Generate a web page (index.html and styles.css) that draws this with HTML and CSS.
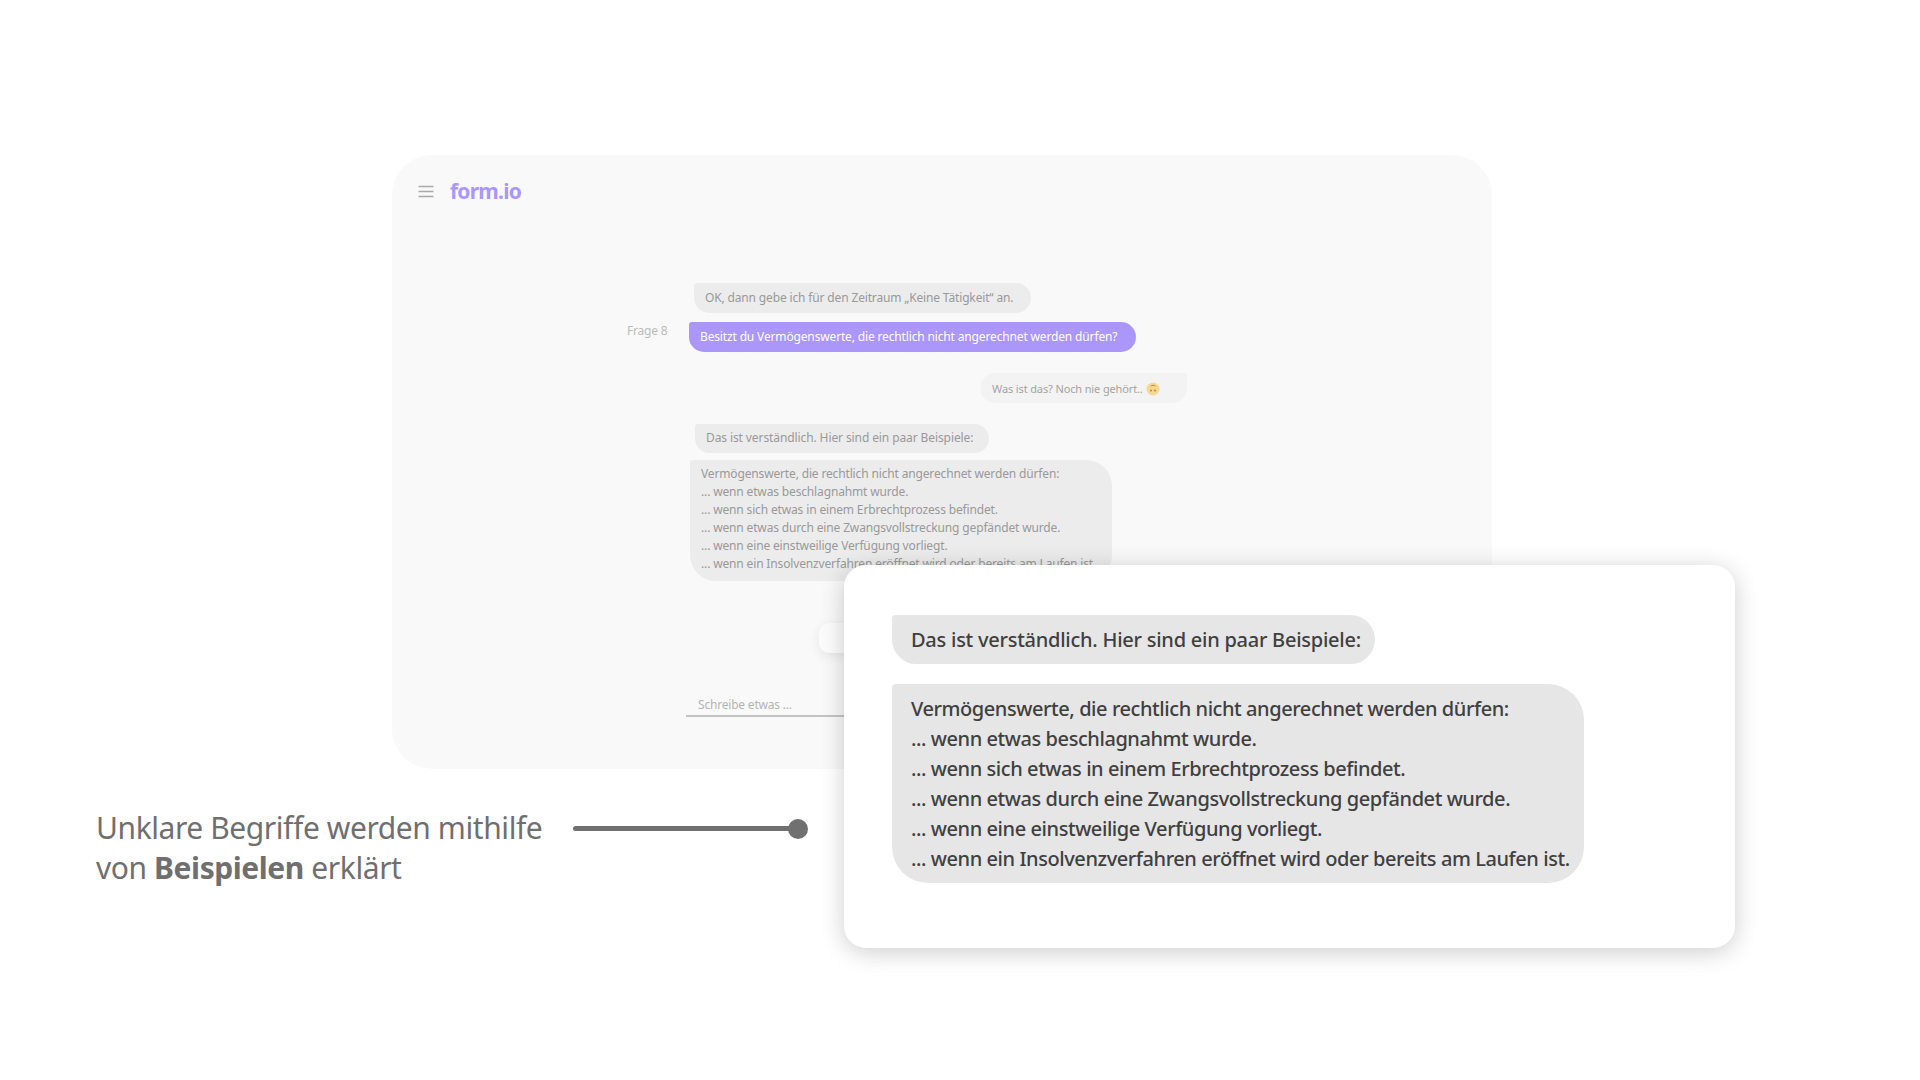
FILE: index.html
```html
<!DOCTYPE html>
<html lang="de">
<head>
<meta charset="utf-8">
<title>form.io</title>
<link rel="stylesheet" href="styles.css">
</head>
<body>
<main class="stage">
  <section class="app">
    <header class="app-head">
      <svg class="menu" width="16" height="13" viewBox="0 0 16 13"><path d="M0.5 1.5H15.5M0.5 6.5H15.5M0.5 11.5H15.5" stroke="#aaaaaa" stroke-width="1.5" fill="none"/></svg>
      <span class="logo">form.io</span>
    </header>
    <div class="msg msg-ok">OK, dann gebe ich für den Zeitraum „Keine Tätigkeit“ an.</div>
    <div class="q-row">
      <span class="q-label">Frage 8</span>
      <div class="msg msg-q">Besitzt du Vermögenswerte, die rechtlich nicht angerechnet werden dürfen?</div>
    </div>
    <div class="msg msg-user">Was ist das? Noch nie gehört..
      <svg class="emoji" width="14" height="14" viewBox="0 0 14 14"><circle cx="7" cy="7" r="6.5" fill="#f6d88f"/><path d="M4.5 4.2C5.5 3 8.5 3 9.5 4.2" stroke="#b08a4a" stroke-width="1" fill="none"/><circle cx="5" cy="8.5" r="0.9" fill="#a5824a"/><circle cx="9" cy="8.5" r="0.9" fill="#a5824a"/></svg>
    </div>
    <div class="msg msg-intro">Das ist verständlich. Hier sind ein paar Beispiele:</div>
    <div class="msg msg-list">Vermögenswerte, die rechtlich nicht angerechnet werden dürfen:<br>... wenn etwas beschlagnahmt wurde.<br>... wenn sich etwas in einem Erbrechtprozess befindet.<br>... wenn etwas durch eine Zwangsvollstreckung gepfändet wurde.<br>... wenn eine einstweilige Verfügung vorliegt.<br>... wenn ein Insolvenzverfahren eröffnet wird oder bereits am Laufen ist.</div>
    <div class="ghost-btn"></div>
    <div class="input">Schreibe etwas ...</div>
  </section>

  <section class="caption-row">
    <p class="caption">Unklare Begriffe werden mithilfe<br>von <strong>Beispielen</strong> erklärt</p>
    <div class="slider"><span class="slider-dot"></span></div>
  </section>

  <section class="zoom-card">
    <div class="big big-intro">Das ist verständlich. Hier sind ein paar Beispiele:</div>
    <div class="big big-list">Vermögenswerte, die rechtlich nicht angerechnet werden dürfen:<br>... wenn etwas beschlagnahmt wurde.<br>... wenn sich etwas in einem Erbrechtprozess befindet.<br>... wenn etwas durch eine Zwangsvollstreckung gepfändet wurde.<br>... wenn eine einstweilige Verfügung vorliegt.<br>... wenn ein Insolvenzverfahren eröffnet wird oder bereits am Laufen ist.</div>
  </section>
</main>
</body>
</html>
```
FILE: styles.css
```css
* { box-sizing: border-box; }
html, body { margin: 0; background: #ffffff; }
body { font-family: "Noto Sans", "Open Sans", sans-serif; letter-spacing: -0.0125em; }
.stage { position: relative; width: 1920px; height: 1080px; padding-top: 155px; overflow: hidden; }

.app { width: 1100px; height: 614px; margin-left: 392px; background: #f9f9f9; border-radius: 40px; padding-top: 21px; overflow: hidden; }
.app-head { display: flex; align-items: center; height: 30px; padding-left: 26px; gap: 16px; }
.menu { display: block; }
.logo { font-size: 21px; line-height: 30px; font-weight: 700; letter-spacing: -0.77px; color: #ab96fa; }

.msg { font-size: 12px; line-height: 18px; letter-spacing: -0.15px; color: #999999; background: #ececec; white-space: nowrap; }
.msg-ok { width: 337px; height: 30px; margin: 77px 0 0 302px; padding: 6px 11px; border-radius: 3px 15px 15px 15px; }
.q-row { display: flex; margin: 9px 0 0 235px; }
.q-label { width: 62px; font-size: 12px; line-height: 18px; color: #bbbbbb; }
.msg-q { width: 447px; height: 30px; padding: 6px 11px; background: #ab96fa; color: #ffffff; border-radius: 3px 15px 15px 15px; }
.msg-user { display: flex; align-items: center; gap: 3px; width: 207px; height: 30px; margin: 21px 0 0 588px; padding: 1px 12px 0; font-size: 11px; letter-spacing: -0.13px; background: #f3f3f3; color: #a3a3a3; border-radius: 15px 3px 15px 15px; }
.emoji { flex: none; }
.msg-intro { width: 294px; height: 29px; margin: 21px 0 0 303px; padding: 5px 11px; letter-spacing: -0.1px; border-radius: 3px 15px 15px 15px; }
.msg-list { width: 422px; height: 121px; margin: 7px 0 0 298px; padding: 5px 11px; border-radius: 3px 26px 26px 26px; }
.ghost-btn { width: 200px; height: 30px; margin: 42px 0 0 427px; background: #fcfcfc; border-radius: 10px; box-shadow: 0 3px 12px rgba(0,0,0,0.08); }
.input { width: 440px; height: 22px; margin: 42px 0 0 294px; padding: 0 12px; font-size: 12px; line-height: 20px; color: #b5b5b5; border-bottom: 2px solid #c4c4c4; }

.caption-row { display: flex; align-items: flex-start; margin: 39px 0 0 96px; }
.caption { width: 477px; margin: 0; font-size: 30px; line-height: 40px; letter-spacing: -0.42px; color: #6f6f6f; white-space: nowrap; }
.caption strong { font-weight: 700; }
.slider { position: relative; width: 225px; height: 5px; margin-top: 18px; background: #707070; border-radius: 3px; }
.slider-dot { position: absolute; right: -10px; top: -7.5px; width: 20px; height: 20px; border-radius: 50%; background: #707070; }

.zoom-card { position: absolute; left: 844px; top: 565px; width: 891px; height: 383px; padding: 50px 0 0 48px; background: #ffffff; border-radius: 22px; box-shadow: 0 4px 24px rgba(0,0,0,0.2); }
.big { font-size: 20px; line-height: 30px; font-weight: 500; color: #404040; background: #e6e6e6; white-space: nowrap; }
.big-intro { width: 483px; height: 49px; padding: 10px 19px; letter-spacing: -0.25px; border-radius: 4px 25px 25px 25px; }
.big-list { width: 692px; height: 199px; margin-top: 20px; padding: 10px 19px; letter-spacing: -0.43px; border-radius: 4px 36px 36px 36px; }
```
